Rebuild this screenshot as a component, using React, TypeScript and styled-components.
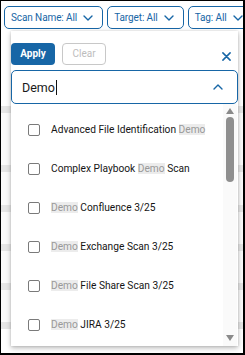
import React from "react";
import styled, { createGlobalStyle } from "styled-components";

const Global = createGlobalStyle`
  html, body { margin: 0; padding: 0; background: #fff; }
  body { font-family: Roboto, "Noto Sans", Arial, sans-serif; }
  * { box-sizing: border-box; }
`;

const BLUE = "#1766a6";

const Frame = styled.div`
  position: relative;
  width: 245px;
  height: 355px;
  border: 1px solid #000;
  border-right-width: 2px;
  border-bottom-width: 2px;
  overflow: hidden;
  background: #fff;
`;

const FilterBar = styled.div`
  display: flex;
  gap: 4px;
  padding: 5px 0 0 3px;
  white-space: nowrap;
`;

const FilterButton = styled.button`
  display: flex;
  align-items: center;
  gap: 6px;
  flex: none;
  height: 23px;
  padding: 0 9px 0 6px;
  border: 1px solid ${BLUE};
  border-radius: 5px;
  background: #fff;
  color: ${BLUE};
  font-family: Roboto, Arial, sans-serif;
  font-size: 10px;
  letter-spacing: -0.1px;
`;

const Table = styled.div`
  display: flex;
  flex-direction: column;
  padding-top: 77px;
`;

const TableRow = styled.div<{ $h: number }>`
  height: ${(p) => p.$h}px;
  border-bottom: 7px solid #e6e6e6;
  background: #fbfbfb;
`;

const Panel = styled.div`
  position: absolute;
  left: 10px;
  top: 30px;
  width: 227px;
  height: 315px;
  background: #fff;
  box-shadow: 0 2px 5px rgba(0, 0, 0, 0.28), 0 0 2px rgba(0, 0, 0, 0.12);
  display: flex;
  flex-direction: column;
`;

const Actions = styled.div`
  display: flex;
  align-items: center;
  gap: 7px;
  padding: 11px 7px 0 0;
  height: 34px;
`;

const ApplyButton = styled.button`
  width: 44px;
  height: 22px;
  border: none;
  border-radius: 4px;
  background: ${BLUE};
  color: #fff;
  font-family: Roboto, Arial, sans-serif;
  font-weight: 700;
  font-size: 10px;
  padding: 0;
`;

const ClearButton = styled.button`
  width: 44px;
  height: 22px;
  border: 1px solid #c8c8c8;
  border-radius: 4px;
  background: #fff;
  color: #bdbdbd;
  font-family: Roboto, Arial, sans-serif;
  font-size: 10px;
  padding: 0;
`;

const CloseIcon = styled.svg`
  margin-left: auto;
  margin-top: 6px;
`;

const SearchBox = styled.div`
  margin-top: 5px;
  height: 34px;
  border: 1px solid ${BLUE};
  border-radius: 5px;
  display: flex;
  align-items: center;
  padding: 0 14px 0 10px;
`;

const SearchText = styled.span`
  font-size: 12.5px;
  color: #1a1a1a;
  display: flex;
  align-items: center;
`;

const Caret = styled.span`
  display: inline-block;
  width: 1px;
  height: 15px;
  background: #111;
  margin-left: 1px;
`;

const ListArea = styled.div`
  flex: 1;
  display: flex;
  min-height: 0;
`;

const List = styled.div`
  flex: 1;
  padding-top: 6px;
  display: flex;
  flex-direction: column;
`;

const Item = styled.div`
  height: 39px;
  display: flex;
  align-items: center;
  padding-left: 17px;
  gap: 11px;
  font-size: 10.2px;
  color: #151515;
  white-space: nowrap;
`;

const Box = styled.span`
  width: 12px;
  height: 12px;
  border: 1.5px solid #7a7a7a;
  border-radius: 2px;
  flex: none;
`;

const Mark = styled.span`
  background: #ececec;
  color: #999;
`;

const ScrollTrack = styled.div`
  width: 14px;
  margin-right: 1px;
  background: #fafafa;
  display: flex;
  flex-direction: column;
  align-items: center;
  padding-top: 4px;
`;

const Thumb = styled.div`
  width: 8px;
  height: 65px;
  margin-top: 3px;
  border-radius: 4px;
  background: #8f8f8f;
`;

const Arrow = styled.svg<{ $bottom?: boolean }>`
  flex: none;
  margin-bottom: ${(p) => (p.$bottom ? "5px" : "0")};
`;

const Spacer = styled.div`
  flex: 1;
`;

const Chevron = ({ up = false }: { up?: boolean }) => (
  <svg width="10" height="6" viewBox="0 0 10 6" fill="none">
    <path
      d={up ? "M1 5L5 1L9 5" : "M1 1L5 5L9 1"}
      stroke={BLUE}
      strokeWidth="1.4"
      strokeLinecap="round"
      strokeLinejoin="round"
    />
  </svg>
);

type Entry = { before?: string; after?: string };
const items: Entry[] = [
  { before: "Advanced File Identification " },
  { before: "Complex Playbook ", after: " Scan" },
  { after: " Confluence 3/25" },
  { after: " Exchange Scan 3/25" },
  { after: " File Share Scan 3/25" },
  { after: " JIRA 3/25" },
];

export default function App() {
  return (
    <>
      <Global />
      <Frame>
        <FilterBar>
          <FilterButton>
            Scan Name: All <Chevron />
          </FilterButton>
          <FilterButton>
            Target: All <Chevron />
          </FilterButton>
          <FilterButton>
            Tag: All <Chevron />
          </FilterButton>
        </FilterBar>
        <Table>
          <TableRow $h={0} />
          <TableRow $h={59} />
          <TableRow $h={40} />
          <TableRow $h={39} />
          <TableRow $h={39} />
          <TableRow $h={39} />
        </Table>
        <Panel>
          <Actions>
            <ApplyButton>Apply</ApplyButton>
            <ClearButton>Clear</ClearButton>
            <CloseIcon width="9" height="9" viewBox="0 0 10 10">
              <path d="M1 1L9 9M9 1L1 9" stroke={BLUE} strokeWidth="1.7" strokeLinecap="round" />
            </CloseIcon>
          </Actions>
          <SearchBox>
            <SearchText>
              Demo
              <Caret />
            </SearchText>
            <Spacer />
            <Chevron up />
          </SearchBox>
          <ListArea>
            <List>
              {items.map((it, i) => (
                <Item key={i}>
                  <Box />
                  <span>
                    {it.before}
                    <Mark>Demo</Mark>
                    {it.after}
                  </span>
                </Item>
              ))}
            </List>
            <ScrollTrack>
              <Arrow width="8" height="6" viewBox="0 0 8 6">
                <path d="M0 6L4 0L8 6Z" fill="#8a8a8a" />
              </Arrow>
              <Thumb />
              <Spacer />
              <Arrow $bottom width="8" height="6" viewBox="0 0 8 6">
                <path d="M0 0L4 6L8 0Z" fill="#8a8a8a" />
              </Arrow>
            </ScrollTrack>
          </ListArea>
        </Panel>
      </Frame>
    </>
  );
}
